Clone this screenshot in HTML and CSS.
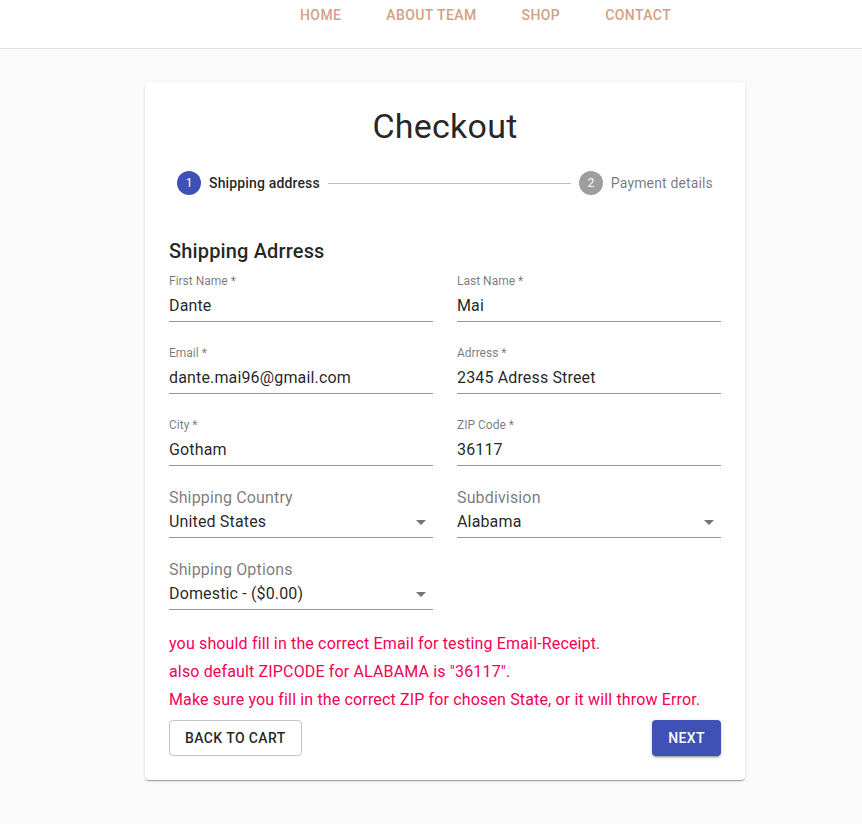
FILE: index.html
```html
<!DOCTYPE html>
<html lang="en">
<head>
<meta charset="utf-8">
<title>Checkout</title>
<link rel="stylesheet" href="styles.css">
</head>
<body>
<header class="topbar">
  <nav class="nav">
    <a class="nav-link">Home</a>
    <a class="nav-link">About Team</a>
    <a class="nav-link">Shop</a>
    <a class="nav-link">Contact</a>
  </nav>
</header>
<main class="layout">
  <section class="paper">
    <h1 class="title">Checkout</h1>
    <div class="stepper">
      <div class="step">
        <span class="step-icon active">1</span>
        <span class="step-label active">Shipping address</span>
      </div>
      <div class="connector"></div>
      <div class="step">
        <span class="step-icon">2</span>
        <span class="step-label">Payment details</span>
      </div>
    </div>
    <h2 class="heading">Shipping Adrress</h2>
    <div class="grid">
      <div class="field">
        <label class="field-label">First Name *</label>
        <div class="input">Dante</div>
      </div>
      <div class="field">
        <label class="field-label">Last Name *</label>
        <div class="input">Mai</div>
      </div>
      <div class="field">
        <label class="field-label">Email *</label>
        <div class="input">dante.mai96@gmail.com</div>
      </div>
      <div class="field">
        <label class="field-label">Adrress *</label>
        <div class="input">2345 Adress Street</div>
      </div>
      <div class="field">
        <label class="field-label">City *</label>
        <div class="input">Gotham</div>
      </div>
      <div class="field">
        <label class="field-label">ZIP Code *</label>
        <div class="input">36117</div>
      </div>
      <div class="select-field">
        <label class="select-label">Shipping Country</label>
        <div class="select">United States
          <svg class="arrow" viewBox="0 0 24 24" width="24" height="24"><path d="M7 10l5 5 5-5z"/></svg>
        </div>
      </div>
      <div class="select-field">
        <label class="select-label">Subdivision</label>
        <div class="select">Alabama
          <svg class="arrow" viewBox="0 0 24 24" width="24" height="24"><path d="M7 10l5 5 5-5z"/></svg>
        </div>
      </div>
      <div class="select-field">
        <label class="select-label">Shipping Options</label>
        <div class="select">Domestic - ($0.00)
          <svg class="arrow" viewBox="0 0 24 24" width="24" height="24"><path d="M7 10l5 5 5-5z"/></svg>
        </div>
      </div>
    </div>
    <div class="notes">
      <p class="note">you should fill in the correct Email for testing Email-Receipt.</p>
      <p class="note">also default ZIPCODE for ALABAMA is "36117".</p>
      <p class="note">Make sure you fill in the correct ZIP for chosen State, or it will throw Error.</p>
    </div>
    <div class="actions">
      <button class="btn btn-outlined">Back to Cart</button>
      <button class="btn btn-contained">Next</button>
    </div>
  </section>
</main>
</body>
</html>
```

FILE: styles.css
```css
* { box-sizing: border-box; }

body {
  margin: 0;
  background: #fafafa;
  font-family: Roboto, "Liberation Sans", Arial, sans-serif;
  color: rgba(0, 0, 0, 0.87);
}

.topbar {
  height: 49px;
  background: #fff;
  border-bottom: 1px solid #e3e3e3;
}

.nav {
  display: flex;
  gap: 45px;
  padding: 3px 0 0 300px;
}

.nav-link {
  font-size: 14px;
  font-weight: 500;
  line-height: 24px;
  letter-spacing: 0.02857em;
  text-transform: uppercase;
  color: #d4a085;
  cursor: pointer;
}

.layout {
  padding: 33px 0 44px 145px;
}

.paper {
  width: 600px;
  background: #fff;
  border-radius: 4px;
  padding: 23px 24px 24px;
  box-shadow: 0 2px 1px -1px rgba(0,0,0,0.2), 0 1px 1px 0 rgba(0,0,0,0.14), 0 1px 3px 0 rgba(0,0,0,0.12);
}

.title {
  margin: 0;
  font-size: 34px;
  font-weight: 400;
  line-height: 42px;
  letter-spacing: 0.00735em;
  text-align: center;
}

.stepper {
  display: flex;
  align-items: center;
  padding: 24px 0 40px;
}

.step {
  display: flex;
  align-items: center;
  padding: 0 8px;
}

.step-icon {
  width: 24px;
  height: 24px;
  border-radius: 50%;
  background: #9e9e9e;
  color: #fff;
  font-size: 12px;
  line-height: 24px;
  text-align: center;
}

.step-icon.active { background: #3f51b5; }

.step-label {
  padding-left: 8px;
  font-size: 14px;
  line-height: 20px;
  color: rgba(0, 0, 0, 0.54);
  letter-spacing: 0.01071em;
}

.step-label.active {
  color: rgba(0, 0, 0, 0.87);
  font-weight: 500;
}

.connector {
  flex: 1;
  border-top: 1px solid #bdbdbd;
}

.heading {
  margin: 0 0 7px;
  font-size: 20px;
  font-weight: 500;
  line-height: 32px;
  letter-spacing: 0.0075em;
}

.grid {
  display: grid;
  grid-template-columns: 1fr 1fr;
  column-gap: 24px;
  row-gap: 24px;
}

.field {
  position: relative;
  padding-top: 16px;
}

.field-label {
  position: absolute;
  top: 1px;
  left: 0;
  font-size: 12px;
  line-height: 12px;
  color: rgba(0, 0, 0, 0.54);
}

.input, .select {
  position: relative;
  font-size: 16px;
  line-height: 19px;
  padding: 6px 0 6px;
  border-bottom: 1px solid rgba(0, 0, 0, 0.42);
  letter-spacing: 0.00938em;
}

.select-label {
  display: block;
  font-size: 16px;
  line-height: 16px;
  color: rgba(0, 0, 0, 0.54);
  letter-spacing: 0.00938em;
}

.arrow {
  position: absolute;
  right: 0;
  top: calc(50% - 12px);
  fill: rgba(0, 0, 0, 0.54);
}

.notes {
  margin-top: 20px;
}

.note {
  margin: 0;
  font-size: 16px;
  line-height: 28px;
  color: #f50057;
  letter-spacing: 0.00938em;
}

.actions {
  display: flex;
  justify-content: space-between;
  margin-top: 6px;
}

.btn {
  font-family: Roboto, "Liberation Sans", Arial, sans-serif;
  font-size: 14px;
  font-weight: 500;
  line-height: 24px;
  letter-spacing: 0.02857em;
  text-transform: uppercase;
  border-radius: 4px;
  cursor: pointer;
}

.btn-outlined {
  background: transparent;
  border: 1px solid rgba(0, 0, 0, 0.23);
  padding: 5px 15px;
  color: rgba(0, 0, 0, 0.87);
}

.btn-contained {
  background: #3f51b5;
  color: #fff;
  border: 0;
  padding: 6px 16px;
  box-shadow: 0 3px 1px -2px rgba(0,0,0,0.2), 0 2px 2px 0 rgba(0,0,0,0.14), 0 1px 5px 0 rgba(0,0,0,0.12);
}
```
